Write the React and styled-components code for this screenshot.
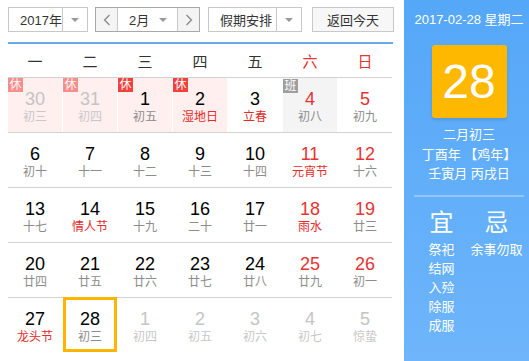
import React from "react";
import styled, { createGlobalStyle } from "styled-components";

const GlobalStyle = createGlobalStyle`
  body {
    margin: 0;
    font-family: "Liberation Sans", "Noto Sans CJK SC", sans-serif;
    background: #fff;
  }
`;

const weekNames = ["一", "二", "三", "四", "五", "六", "日"];

const weeks = [
  [
    { d: 30, l: "初三", other: true, bg: "rest", tag: "休" },
    { d: 31, l: "初四", other: true, bg: "rest", tag: "休" },
    { d: 1, l: "初五", bg: "rest", tag: "休" },
    { d: 2, l: "湿地日", fest: true, bg: "rest", tag: "休" },
    { d: 3, l: "立春", fest: true },
    { d: 4, l: "初八", red: true, bg: "work", tag: "班" },
    { d: 5, l: "初九", red: true },
  ],
  [
    { d: 6, l: "初十" },
    { d: 7, l: "十一" },
    { d: 8, l: "十二" },
    { d: 9, l: "十三" },
    { d: 10, l: "十四" },
    { d: 11, l: "元宵节", red: true, fest: true },
    { d: 12, l: "十六", red: true },
  ],
  [
    { d: 13, l: "十七" },
    { d: 14, l: "情人节", fest: true },
    { d: 15, l: "十九" },
    { d: 16, l: "二十" },
    { d: 17, l: "廿一" },
    { d: 18, l: "雨水", red: true, fest: true },
    { d: 19, l: "廿三", red: true },
  ],
  [
    { d: 20, l: "廿四" },
    { d: 21, l: "廿五" },
    { d: 22, l: "廿六" },
    { d: 23, l: "廿七" },
    { d: 24, l: "廿八" },
    { d: 25, l: "廿九", red: true },
    { d: 26, l: "初一", red: true },
  ],
  [
    { d: 27, l: "龙头节", fest: true },
    { d: 28, l: "初三", sel: true },
    { d: 1, l: "初四", other: true },
    { d: 2, l: "初五", other: true },
    { d: 3, l: "初六", other: true },
    { d: 4, l: "初七", other: true },
    { d: 5, l: "惊蛰", other: true },
  ],
];

const yi = ["祭祀", "结网", "入殓", "除服", "成服"];

const Chevron = ({ dir }) => (
  <svg width="8" height="12" viewBox="0 0 8 12">
    <path
      d={dir === "left" ? "M6.5 1 L1.5 6 L6.5 11" : "M1.5 1 L6.5 6 L1.5 11"}
      fill="none"
      stroke="#888"
      strokeWidth="1.3"
    />
  </svg>
);

export default function App() {
  return (
    <>
      <GlobalStyle />
      <Wrapper>
        <Main>
          <Toolbar>
            <Select $w={80}>
              <SelectText>2017年</SelectText>
              <Caret />
            </Select>
            <MonthGroup>
              <NavButton>
                <Chevron dir="left" />
              </NavButton>
              <MonthSelect>
                <span>2月</span>
                <CaretIcon />
              </MonthSelect>
              <NavButton $right>
                <Chevron dir="right" />
              </NavButton>
            </MonthGroup>
            <Select $w={94} $ml={8}>
              <SelectText>假期安排</SelectText>
              <Caret />
            </Select>
            <TodayButton>返回今天</TodayButton>
          </Toolbar>
          <BlueLine />
          <WeekHeader>
            {weekNames.map((n, i) => (
              <WeekName key={n} $red={i > 4}>
                {n}
              </WeekName>
            ))}
          </WeekHeader>
          {weeks.map((row, r) => (
            <Week key={r}>
              {row.map((c, i) => (
                <Day key={i} $bg={c.bg} $sel={c.sel}>
                  {c.tag && (
                    <Tag $work={c.tag === "班"} $faded={c.other}>
                      {c.tag}
                    </Tag>
                  )}
                  <DayNum $other={c.other} $red={c.red}>
                    {c.d}
                  </DayNum>
                  <Lunar $other={c.other} $fest={c.fest}>
                    {c.l}
                  </Lunar>
                </Day>
              ))}
            </Week>
          ))}
        </Main>
        <Side>
          <SideDate>2017-02-28 星期二</SideDate>
          <BigDay>28</BigDay>
          <SideInfo>
            <div>二月初三</div>
            <div>丁酉年 【鸡年】</div>
            <div>壬寅月 丙戌日</div>
          </SideInfo>
          <SideLine />
          <Almanac>
            <AlmanacCol>
              <AlmanacTitle>宜</AlmanacTitle>
              {yi.map((t) => (
                <AlmanacItem key={t}>{t}</AlmanacItem>
              ))}
            </AlmanacCol>
            <AlmanacCol>
              <AlmanacTitle>忌</AlmanacTitle>
              <AlmanacItem>余事勿取</AlmanacItem>
            </AlmanacCol>
          </Almanac>
        </Side>
      </Wrapper>
    </>
  );
}

const Wrapper = styled.div`
  display: flex;
  width: 529px;
  height: 361px;
  overflow: hidden;
`;

const Main = styled.div`
  width: 396px;
  padding: 7px 0 0 8px;
`;

const Toolbar = styled.div`
  display: flex;
  height: 25px;
  font-size: 13px;
  color: #333;
`;

const Select = styled.div`
  display: flex;
  width: ${(p) => p.$w}px;
  margin-left: ${(p) => p.$ml || 0}px;
  box-sizing: border-box;
  border: 1px solid #c8c8c8;
  background: #fff;
`;

const SelectText = styled.div`
  flex: 1;
  display: flex;
  align-items: center;
  padding-left: 11px;
`;

const Caret = styled.div`
  width: 24px;
  border-left: 1px solid #c8c8c8;
  display: flex;
  align-items: center;
  justify-content: center;
  &::after {
    content: "";
    border-left: 4px solid transparent;
    border-right: 4px solid transparent;
    border-top: 4px solid #999;
  }
`;

const CaretIcon = styled.i`
  border-left: 4px solid transparent;
  border-right: 4px solid transparent;
  border-top: 4px solid #999;
`;

const MonthGroup = styled.div`
  display: flex;
  width: 105px;
  margin-left: 7px;
  box-sizing: border-box;
  border: 1px solid #a8a8a8;
`;

const NavButton = styled.div`
  width: 21px;
  display: flex;
  align-items: center;
  justify-content: center;
  background: #f4f4f4;
  border-left: ${(p) => (p.$right ? "1px solid #c8c8c8" : "none")};
  border-right: ${(p) => (p.$right ? "none" : "1px solid #c8c8c8")};
`;

const MonthSelect = styled.div`
  flex: 1;
  display: flex;
  align-items: center;
  justify-content: space-between;
  padding: 0 10px 0 11px;
  background: #fff;
`;

const TodayButton = styled.div`
  width: 82px;
  margin-left: 10px;
  box-sizing: border-box;
  border: 1px solid #c8c8c8;
  background: #f7f7f7;
  display: flex;
  align-items: center;
  justify-content: center;
`;

const BlueLine = styled.div`
  width: 385px;
  height: 2px;
  margin-top: 10px;
  background: #6aa8ea;
`;

const WeekHeader = styled.div`
  display: grid;
  grid-template-columns: repeat(7, 54px);
  column-gap: 1px;
  height: 33px;
  align-items: center;
`;

const WeekName = styled.div`
  text-align: center;
  font-size: 15px;
  color: ${(p) => (p.$red ? "#e63333" : "#333")};
`;

const Week = styled.div`
  display: grid;
  grid-template-columns: repeat(7, 54px);
  column-gap: 1px;
  width: 384px;
  border-top: 1px solid #d2d2d2;
`;

const Day = styled.div`
  position: relative;
  height: 54px;
  box-sizing: border-box;
  padding-top: 11px;
  text-align: center;
  background: ${(p) =>
    p.$bg === "rest" ? "#ffefef" : p.$bg === "work" ? "#f4f4f4" : "#fff"};
  &::after {
    content: "";
    display: ${(p) => (p.$sel ? "block" : "none")};
    position: absolute;
    left: 0;
    right: 0;
    top: -1px;
    bottom: 0;
    border: 3px solid #ffb400;
  }
`;

const Tag = styled.span`
  position: absolute;
  left: 0;
  top: ${(p) => (p.$work ? "1px" : "0")};
  width: 15px;
  height: 14px;
  font-size: 12px;
  line-height: 14px;
  color: #fff;
  background: ${(p) => (p.$work ? "#9e9e9e" : "#f0413c")};
  opacity: ${(p) => (p.$faded ? 0.55 : 1)};
`;

const DayNum = styled.div`
  font-size: 18px;
  line-height: 20px;
  color: ${(p) => (p.$other ? "#c4c4c4" : p.$red ? "#e63333" : "#000")};
`;

const Lunar = styled.div`
  font-size: 12px;
  line-height: 16px;
  color: ${(p) => (p.$other ? "#c8c8c8" : p.$fest ? "#e62a2a" : "#8c8c8c")};
`;

const Side = styled.div`
  flex: 1;
  margin-left: 0;
  padding: 10px 5px 0 10px;
  background: linear-gradient(#55a7f8, #6eb5fb);
  color: #fff;
  display: flex;
  flex-direction: column;
  align-items: center;
`;

const SideDate = styled.div`
  font-size: 13px;
  line-height: 20px;
  white-space: nowrap;
`;

const BigDay = styled.div`
  width: 75px;
  height: 73px;
  margin-top: 15px;
  border-radius: 3px;
  background: #ffb800;
  box-shadow: 0 2px 3px rgba(0, 0, 0, 0.12);
  font-size: 48px;
  display: flex;
  align-items: center;
  justify-content: center;
`;

const SideInfo = styled.div`
  margin-top: 7px;
  font-size: 13px;
  line-height: 19.5px;
  text-align: center;
  white-space: nowrap;
`;

const SideLine = styled.div`
  align-self: stretch;
  height: 2px;
  margin-top: 11px;
  background: rgba(255, 255, 255, 0.3);
`;

const Almanac = styled.div`
  align-self: stretch;
  display: grid;
  grid-template-columns: 1fr 1fr;
  margin-top: 12px;
`;

const AlmanacCol = styled.div`
  display: flex;
  flex-direction: column;
  align-items: center;
`;

const AlmanacTitle = styled.div`
  font-size: 24px;
  line-height: 28px;
  margin-bottom: 3px;
`;

const AlmanacItem = styled.div`
  font-size: 13px;
  line-height: 19px;
`;
